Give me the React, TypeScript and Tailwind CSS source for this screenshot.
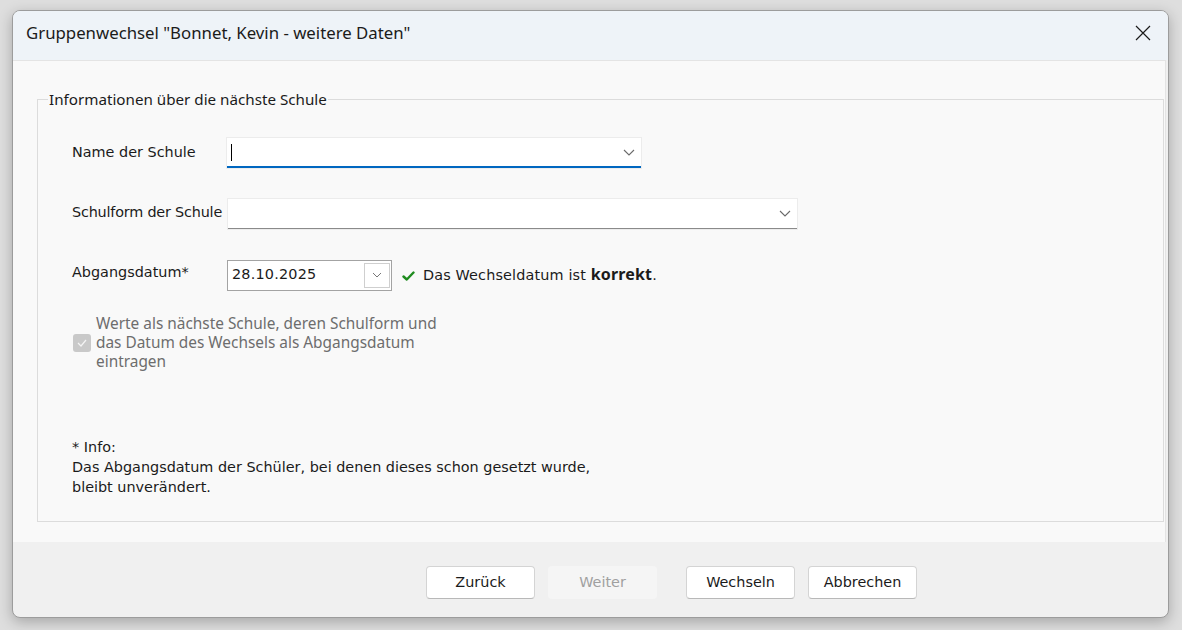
import React from "react";

const tahoma = { fontFamily: '"DejaVu Sans", Verdana, sans-serif' };
const segoe = { fontFamily: '"Noto Sans", "Open Sans", sans-serif' };

function Chevron({ className = "" }: { className?: string }) {
  return (
    <svg width="12" height="7" viewBox="0 0 12 7" className={className}>
      <path d="M1 1 L6 6 L11 1" fill="none" stroke="#6b6b6b" strokeWidth="1.1" />
    </svg>
  );
}

function Button({ label, disabled = false }: { label: string; disabled?: boolean }) {
  return (
    <div
      className={
        disabled
          ? "flex h-[33px] w-[109px] items-center justify-center rounded-[4px] bg-[#f5f5f5] text-[14.4px] text-[#a0a0a0]"
          : "flex h-[33px] w-[109px] items-center justify-center rounded-[4px] border border-[#d4d4d4] border-b-[#b8b8b8] bg-white text-[14.4px] text-[#1a1a1a]"
      }
      style={tahoma}
    >
      {label}
    </div>
  );
}

export default function App() {
  return (
    <div className="h-[630px] w-[1182px] overflow-hidden bg-[#dedede] pl-[12px] pt-[10px]">
      <div className="flex h-[608px] w-[1157px] flex-col overflow-hidden rounded-[8px] border border-[#9c9c9c] bg-[#f0f0f0] shadow-[0_4px_14px_rgba(0,0,0,0.25)]">
        {/* title bar */}
        <div className="flex h-[49px] shrink-0 items-center justify-between bg-[#eef3f8] pb-[5px] pl-[13px] pr-[17px]">
          <span className="text-[16.8px] text-[#1b1b1b]" style={segoe}>
            Gruppenwechsel "Bonnet, Kevin - weitere Daten"
          </span>
          <svg width="16" height="16" viewBox="0 0 16 16">
            <path d="M1 1 L15 15 M15 1 L1 15" stroke="#1b1b1b" strokeWidth="1.2" />
          </svg>
        </div>

        {/* content */}
        <div className="mr-[2px] flex h-[482px] shrink-0 flex-col border-r border-t border-[#e4e4e4] bg-[#f9f9f9] pl-[24px] pt-[38px]">
          <div className="relative mr-[1px] h-[423px] border border-[#dcdcdc] pl-[34px]">
            <span
              className="absolute left-[10px] top-[-12px] bg-[#f9f9f9] px-[1px] text-[15.2px] leading-[22px] text-[#1b1b1b]"
              style={segoe}
            >
              Informationen über die nächste Schule
            </span>

            <div className="flex flex-col text-[14.4px] text-[#1b1b1b]" style={tahoma}>
              {/* Name der Schule */}
              <div className="mt-[38px] flex h-[30px] items-center">
                <span className="w-[155px] pb-[1px]">Name der Schule</span>
                <div className="flex h-[30px] w-[414px] items-center justify-between border-b-2 border-[#0067c0] bg-white pl-[4px] pr-[6px] shadow-[0_0_0_1px_#ececec]">
                  <div className="h-[17px] w-[1px] bg-black" />
                  <Chevron />
                </div>
              </div>

              {/* Schulform der Schule */}
              <div className="mt-[31px] flex h-[30px] items-center">
                <span className="w-[156px] pb-[2px] tracking-[-0.2px]">Schulform der Schule</span>
                <div className="flex h-[30px] w-[569px] items-center justify-end border-b border-[#8a8a8a] bg-white pr-[6px] shadow-[0_0_0_1px_#ececec]">
                  <Chevron />
                </div>
              </div>

              {/* Abgangsdatum */}
              <div className="mt-[31px] flex h-[30px] items-center">
                <span className="w-[155px] pb-[5px]">Abgangsdatum*</span>
                <div className="flex h-[31px] w-[165px] items-center justify-between border border-[#a3a3a3] bg-white pl-[4px] pr-[1px]">
                  <span className="tracking-[0.2px]">28.10.2025</span>
                  <div className="flex h-[25px] w-[26px] items-center justify-center border border-[#cfcfcf] bg-white">
                    <svg width="10" height="6" viewBox="0 0 10 6">
                      <path d="M1 1 L5 5 L9 1" fill="none" stroke="#777" strokeWidth="1" />
                    </svg>
                  </div>
                </div>
                <svg width="13" height="10" viewBox="0 0 13 10" className="ml-[10px] mt-[2px]">
                  <path d="M1.5 5.5 L4.8 8.5 L11.5 1.5" fill="none" stroke="#1f8c1f" strokeWidth="2.4" strokeLinecap="round" strokeLinejoin="round" />
                </svg>
                <span className="ml-[8px] pb-[2px] tracking-[0.15px]">
                  Das Wechseldatum ist <b className="text-[16px] font-bold" style={segoe}>korrekt</b>.
                </span>
              </div>

              {/* Übernahme-Option */}
              <div className="ml-[1px] mt-[24px] flex items-center">
                <div className="flex h-[18px] w-[18px] items-center justify-center rounded-[3px] bg-[#c9c9c9]">
                  <svg width="10" height="8" viewBox="0 0 10 8">
                    <path d="M1 4 L4 7 L9 1" fill="none" stroke="#f4f4f4" strokeWidth="1.2" />
                  </svg>
                </div>
                <div className="ml-[5px] text-[15.4px] leading-[19px] text-[#6d6d6d]" style={segoe}>
                  Werte als nächste Schule, deren Schulform und
                  <br />
                  das Datum des Wechsels als Abgangsdatum
                  <br />
                  eintragen
                </div>
              </div>

              {/* Hinweis */}
              <div className="mt-[66px] leading-[20px]">
                * Info:
                <br />
                Das Abgangsdatum der Schüler, bei denen dieses schon gesetzt wurde,
                <br />
                bleibt unverändert.
              </div>
            </div>
          </div>
        </div>

        {/* footer */}
        <div className="flex flex-1 items-start pl-[413px] pt-[24px]">
          <Button label="Zurück" />
          <div className="ml-[13px]">
            <Button label="Weiter" disabled />
          </div>
          <div className="ml-[29px]">
            <Button label="Wechseln" />
          </div>
          <div className="ml-[13px]">
            <Button label="Abbrechen" />
          </div>
        </div>
      </div>
    </div>
  );
}
